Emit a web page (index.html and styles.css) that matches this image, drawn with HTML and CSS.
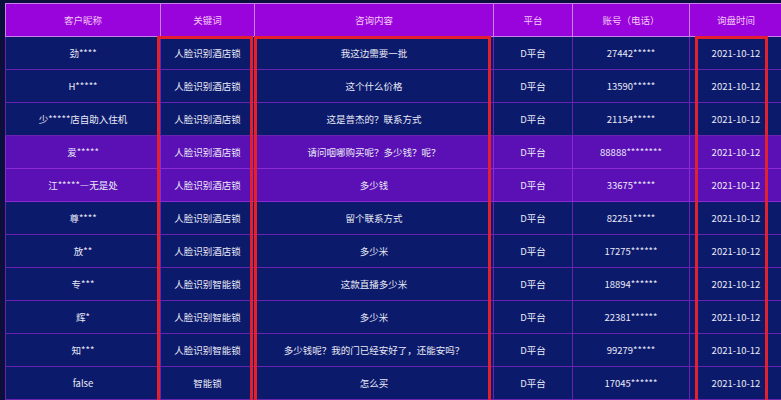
FILE: index.html
```html
<!DOCTYPE html>
<html lang="zh">
<head>
<meta charset="utf-8">
<link rel="stylesheet" href="styles.css">
</head>
<body>
<div class="stage">
  <table class="grid">
    <colgroup>
      <col class="c-name"><col class="c-key"><col class="c-content"><col class="c-plat"><col class="c-acct"><col class="c-time">
    </colgroup>
    <thead>
      <tr><th>客户昵称</th><th>关键词</th><th>咨询内容</th><th>平台</th><th>账号（电话）</th><th>询盘时间</th></tr>
    </thead>
    <tbody>
      <tr><td>劲****</td><td>人脸识别酒店锁</td><td>我这边需要一批</td><td>D平台</td><td>27442*****</td><td>2021-10-12</td></tr>
      <tr><td>H*****</td><td>人脸识别酒店锁</td><td>这个什么价格</td><td>D平台</td><td>13590*****</td><td>2021-10-12</td></tr>
      <tr><td>少*****店自助入住机</td><td>人脸识别酒店锁</td><td>这是普杰的？联系方式</td><td>D平台</td><td>21154*****</td><td>2021-10-12</td></tr>
      <tr class="hl"><td>爱*****</td><td>人脸识别酒店锁</td><td>请问咽哪购买呢？多少钱？呢？</td><td>D平台</td><td>88888********</td><td>2021-10-12</td></tr>
      <tr class="hl"><td>江*****—无是处</td><td>人脸识别酒店锁</td><td>多少钱</td><td>D平台</td><td>33675*****</td><td>2021-10-12</td></tr>
      <tr><td>尊****</td><td>人脸识别酒店锁</td><td>留个联系方式</td><td>D平台</td><td>82251*****</td><td>2021-10-12</td></tr>
      <tr><td>放**</td><td>人脸识别酒店锁</td><td>多少米</td><td>D平台</td><td>17275******</td><td>2021-10-12</td></tr>
      <tr><td>专***</td><td>人脸识别智能锁</td><td>这款直播多少米</td><td>D平台</td><td>18894******</td><td>2021-10-12</td></tr>
      <tr><td>辉*</td><td>人脸识别智能锁</td><td>多少米</td><td>D平台</td><td>22381******</td><td>2021-10-12</td></tr>
      <tr><td>知***</td><td>人脸识别智能锁</td><td>多少钱呢？我的门已经安好了，还能安吗？</td><td>D平台</td><td>99279*****</td><td>2021-10-12</td></tr>
      <tr><td>false</td><td>智能锁</td><td>怎么买</td><td>D平台</td><td>17045******</td><td>2021-10-12</td></tr>
    </tbody>
  </table>
  <div class="mark mark-key"></div>
  <div class="mark mark-content"></div>
  <div class="mark mark-time"></div>
</div>
</body>
</html>
```

FILE: styles.css
```css
html, body {
  margin: 0;
  padding: 0;
  background: #0b0f3c;
  overflow: hidden;
}
.stage {
  position: relative;
  width: 781px;
  height: 400px;
  padding: 3px 0 0 5px;
  box-sizing: border-box;
  overflow: hidden;
}
.grid {
  border-collapse: collapse;
  table-layout: fixed;
  width: 777px;
  font-family: "Noto Sans CJK SC", "Noto Sans", sans-serif;
  font-size: 9.5px;
}
.c-name { width: 155px; }
.c-key { width: 94px; }
.c-content { width: 239px; }
.c-plat { width: 79px; }
.c-acct { width: 117px; }
.c-time { width: 93px; }
.grid th {
  height: 32px;
  padding: 0;
  background: #9a04dc;
  color: #f2c8f6;
  font-weight: normal;
  border: 1px solid #c682ea;
  text-align: center;
}
.grid td {
  height: 32px;
  padding: 0;
  background: #0c1a6c;
  color: #e9eaf6;
  text-align: center;
  border: 1px solid #6a22b2;
  white-space: nowrap;
}
.grid tr.hl td {
  background: #5a10b4;
  border-color: #8a2ad0;
}
.mark {
  position: absolute;
  top: 36px;
  height: 380px;
  border: 3px solid #e3202e;
  box-sizing: border-box;
}
.mark-key { left: 157px; width: 96px; }
.mark-content { left: 254px; width: 237px; }
.mark-time { left: 695px; width: 73px; }
```
